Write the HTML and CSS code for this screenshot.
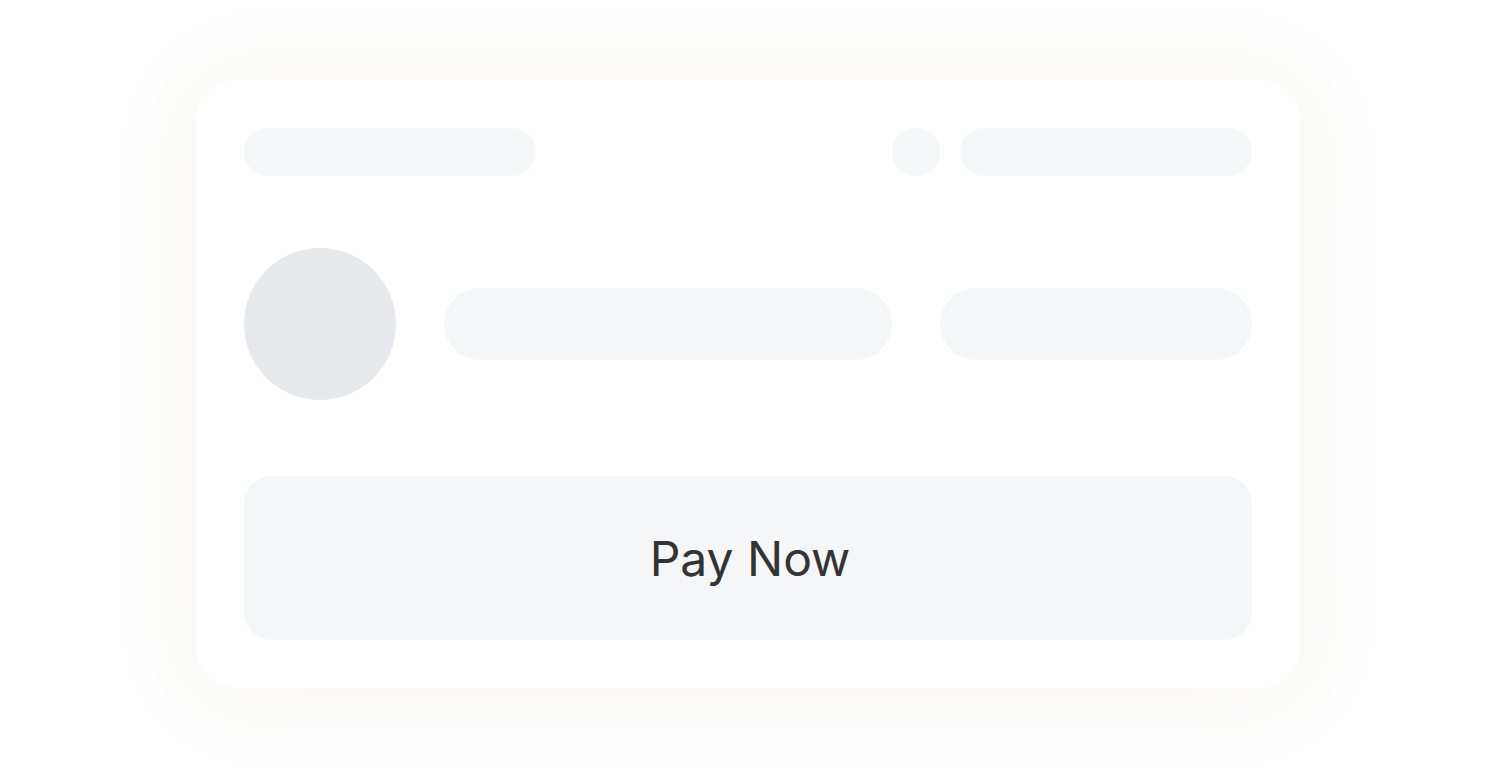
FILE: index.html
```html
<!DOCTYPE html>
<html lang="en">
<head>
<meta charset="utf-8">
<title>Pay Now</title>
<link rel="stylesheet" href="styles.css">
</head>
<body>
<main class="page">
  <section class="card">
    <div class="row-top">
      <div class="sk sk-title"></div>
      <div class="spacer"></div>
      <div class="sk sk-dot"></div>
      <div class="sk sk-meta"></div>
    </div>
    <div class="row-mid">
      <div class="sk sk-avatar"></div>
      <div class="sk sk-line-a"></div>
      <div class="sk sk-line-b"></div>
    </div>
    <button class="pay-btn" type="button">Pay Now</button>
  </section>
</main>
</body>
</html>
```
FILE: styles.css
```css
html, body {
  margin: 0;
  padding: 0;
  background: #ffffff;
}
body {
  font-family: Inter, "Noto Sans", sans-serif;
}
.page {
  display: flex;
  padding: 80px 0 80px 196px;
}
.card {
  width: 1104px;
  height: 608px;
  box-sizing: border-box;
  padding: 48px;
  background: #ffffff;
  border-radius: 40px;
  box-shadow: 0 4px 100px rgba(120, 95, 60, 0.07);
  display: flex;
  flex-direction: column;
}
.sk {
  background: #f5f6f8;
  flex: none;
}
.row-top {
  display: flex;
  align-items: center;
  height: 48px;
}
.spacer {
  flex: 1;
}
.sk-title {
  width: 292px;
  height: 48px;
  border-radius: 24px;
}
.sk-dot {
  width: 48px;
  height: 48px;
  border-radius: 50%;
}
.sk-meta {
  width: 292px;
  height: 48px;
  border-radius: 24px;
  margin-left: 20px;
}
.row-mid {
  display: flex;
  align-items: center;
  gap: 48px;
  margin-top: 72px;
  height: 152px;
}
.sk-avatar {
  width: 152px;
  height: 152px;
  border-radius: 50%;
  background: #e8e9ec;
}
.sk-line-a {
  width: 448px;
  height: 72px;
  border-radius: 36px;
}
.sk-line-b {
  width: 312px;
  height: 72px;
  border-radius: 36px;
}
.pay-btn {
  margin-top: 76px;
  height: 164px;
  width: 100%;
  border: none;
  border-radius: 28px;
  background: #f5f6f8;
  color: #333333;
  font-family: Inter, "Noto Sans", sans-serif;
  font-size: 48px;
  font-weight: 400;
  padding: 0 0 0 4px;
  cursor: pointer;
}
```
